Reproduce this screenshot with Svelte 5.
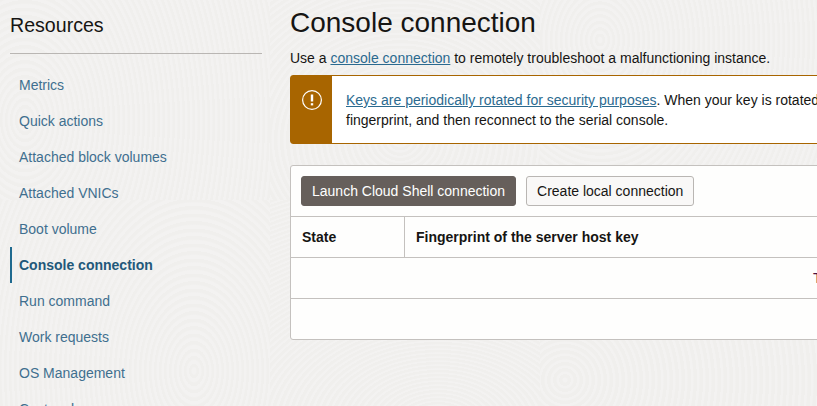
<script>
	const links = [
		"Metrics",
		"Quick actions",
		"Attached block volumes",
		"Attached VNICs",
		"Boot volume",
		"Console connection",
		"Run command",
		"Work requests",
		"OS Management",
		"Custom logs",
	];
	const active = "Console connection";
</script>

<div class="page">
	<aside class="sidebar">
		<h2>Resources</h2>
		<nav>
			{#each links as link}
				<a href="#top" class:active={link === active}>{link}</a>
			{/each}
		</nav>
	</aside>

	<main>
		<h1>Console connection</h1>
		<p class="intro">
			Use a <a href="#top">console connection</a> to remotely troubleshoot a malfunctioning instance.
		</p>

		<div class="notice">
			<div class="notice-icon">
				<svg width="20" height="20" viewBox="0 0 20 20" fill="none">
					<circle cx="10" cy="10" r="9.4" stroke="#fff" stroke-width="1.2" />
					<path d="M10 4.5v7" stroke="#fff" stroke-width="2.4" />
					<path d="M10 13.2v2.2" stroke="#fff" stroke-width="2.4" />
				</svg>
			</div>
			<div class="notice-text">
				<a href="#top">Keys are periodically rotated for security purposes</a>. When your key is rotated, create a new<br />
				fingerprint, and then reconnect to the serial console.
			</div>
		</div>

		<section class="panel">
			<div class="toolbar">
				<button class="primary">Launch Cloud Shell connection</button>
				<button>Create local connection</button>
			</div>
			<div class="row head">
				<div class="state">State</div>
				<div>Fingerprint of the server host key</div>
			</div>
			<div class="row empty"><span>There are no console connections</span></div>
			<div class="foot"></div>
		</section>
	</main>
</div>

<style>
	:global(body) {
		margin: 0;
		overflow: hidden;
		background-color: #f0efed;
	}

	.page {
		display: flex;
		width: 817px;
		height: 406px;
		overflow: hidden;
		font-family: "Liberation Sans", Arial, sans-serif;
		font-size: 14px;
		color: #312d2a;
		/* faint swirl texture, one patch per swirl */
		background-image:
			repeating-radial-gradient(ellipse 60px 90px at 194px 171px, #f3f2f1 0, #f3f2f1 2px, #f0efed 3px, #f0efed 5px),
			repeating-radial-gradient(ellipse 90px 60px at 168px 226px, #f3f2f1 0, #f3f2f1 2px, #f0efed 3px, #f0efed 6px),
			repeating-radial-gradient(ellipse 70px 70px at 25px 180px, #f3f2f1 0, #f3f2f1 2px, #f0efed 3px, #f0efed 6px),
			repeating-radial-gradient(ellipse 60px 90px at 25px 120px, #f3f2f1 0, #f3f2f1 2px, #f0efed 3px, #f0efed 5px),
			repeating-radial-gradient(ellipse 80px 70px at 130px 140px, #f3f2f1 0, #f3f2f1 2px, #f0efed 3px, #f0efed 6px),
			repeating-radial-gradient(ellipse 70px 90px at 60px 40px, #f3f2f1 0, #f3f2f1 2px, #f0efed 3px, #f0efed 5px);
		background-size: 270px 206px, 270px 206px, 277px 206px, 270px 200px, 270px 200px, 277px 200px;
		background-position: 0 200px, 270px 200px, 540px 200px, 0 0, 270px 0, 540px 0;
		background-repeat: no-repeat;
	}

	.sidebar {
		flex: none;
		width: 252px;
		margin-left: 10px;
	}

	h2 {
		margin: 0;
		padding: 13px 0 15px;
		height: 25px;
		line-height: 25px;
		font-size: 19.6px;
		font-weight: 400;
		color: #161513;
		border-bottom: 1px solid #b9b6b3;
	}

	nav {
		display: flex;
		flex-direction: column;
		margin-top: 13px;
	}

	nav a {
		flex: none;
		height: 36px;
		line-height: 36px;
		padding-left: 9px;
		color: #3f6f8f;
		text-decoration: none;
	}

	nav a.active {
		padding-left: 7px;
		border-left: 2px solid #1f6a8f;
		font-weight: 700;
		color: #22587a;
	}

	main {
		flex: none;
		width: 560px;
		margin-left: 28px;
	}

	h1 {
		margin: 0;
		padding-top: 7px;
		line-height: 32px;
		font-size: 28px;
		font-weight: 400;
		color: #161513;
	}

	.intro {
		margin: 10px 0 0;
		line-height: 18px;
		color: #161513;
		white-space: nowrap;
	}

	a {
		color: #2b6a8f;
	}

	.notice {
		display: flex;
		box-sizing: border-box;
		height: 69px;
		margin-top: 8px;
		background: #fff;
		border: 1px solid #a86500;
		border-radius: 3px;
	}

	.notice-icon {
		flex: none;
		width: 41px;
		padding: 14px 0 0 11px;
		box-sizing: border-box;
		background: #a86500;
	}

	.notice-text {
		padding: 14px 0 0 14px;
		line-height: 20px;
		color: #161513;
		white-space: nowrap;
	}

	.panel {
		box-sizing: border-box;
		height: 175px;
		margin-top: 21px;
		background: #fefefd;
		border: 1px solid #c4c1be;
		border-radius: 3px;
	}

	.toolbar {
		display: flex;
		gap: 10px;
		height: 50px;
		padding: 10px 0 0 10px;
		box-sizing: border-box;
	}

	button {
		height: 30px;
		padding: 0 10px;
		font: inherit;
		color: #161513;
		background: #f9f8f7;
		border: 1px solid #b9b6b3;
		border-radius: 3px;
	}

	button.primary {
		color: #fff;
		background: #665f5b;
		border-color: #665f5b;
	}

	.row {
		display: flex;
		box-sizing: border-box;
		height: 41px;
		border-top: 1px solid #c4c1be;
		white-space: nowrap;
	}

	.head {
		line-height: 40px;
		font-weight: 700;
		color: #161513;
	}

	.head div {
		padding-left: 11px;
	}

	.head .state {
		box-sizing: border-box;
		width: 114px;
		border-right: 1px solid #c4c1be;
	}

	.empty {
		line-height: 40px;
		padding-left: 522px;
		color: #4a1040;
	}

	.foot {
		height: 40px;
		border-top: 1px solid #c4c1be;
	}
</style>
